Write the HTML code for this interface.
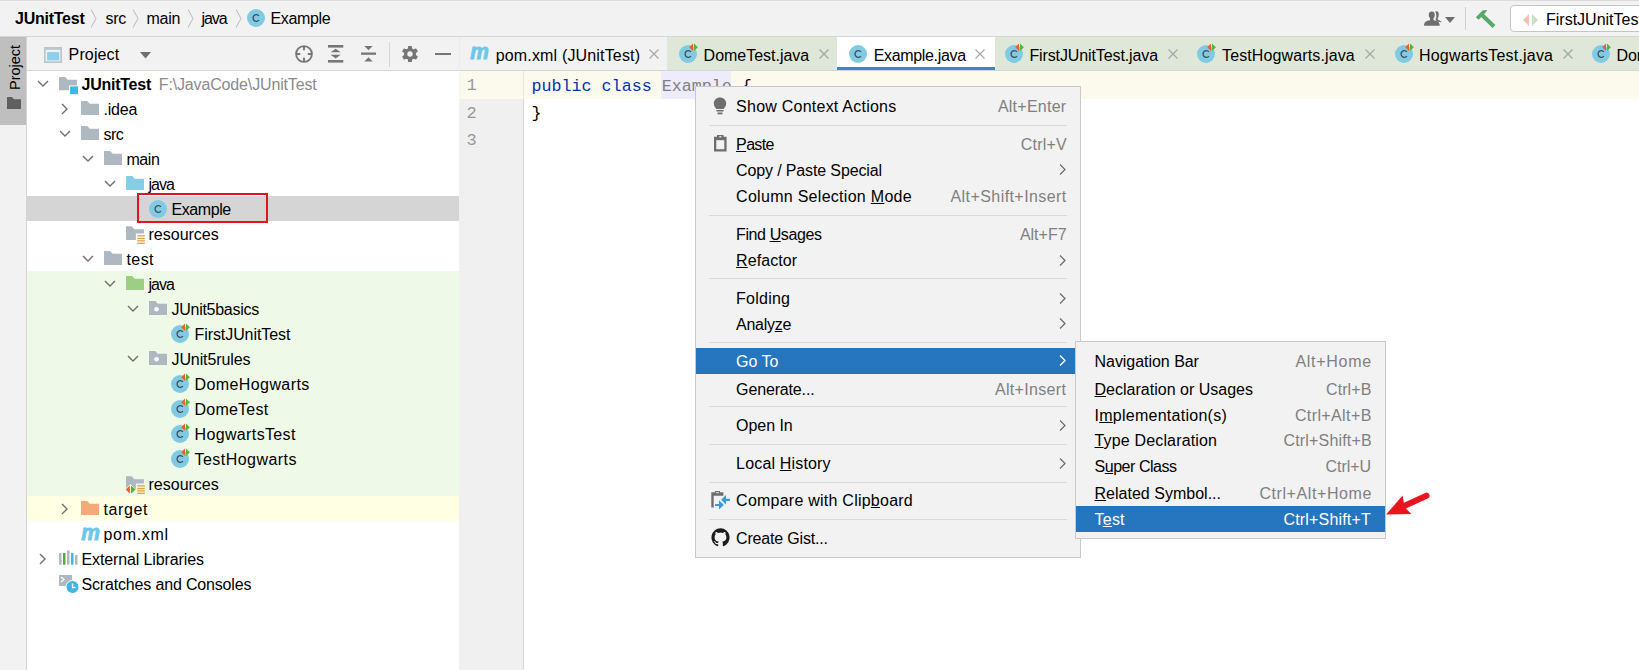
<!DOCTYPE html><html><head><meta charset="utf-8"><style>
html,body{margin:0;padding:0;}
body{width:1639px;height:670px;position:relative;overflow:hidden;background:#fff;font-family:"Liberation Sans", sans-serif;}
.t{position:absolute;white-space:pre;font-family:"Liberation Sans", sans-serif;}
.r{position:absolute;}
.s{position:absolute;overflow:visible;}
u{text-decoration:underline;text-underline-offset:0.6px;text-decoration-thickness:1.2px;}
</style></head><body>
<div class="r" style="left:0px;top:0px;width:1639px;height:36px;background:#f2f2f2;"></div>
<div class="r" style="left:0px;top:0px;width:1639px;height:1px;background:#dcdcdc;"></div>
<div class="r" style="left:0px;top:36px;width:1639px;height:1px;background:#d6d6d6;"></div>
<div class="t " style="left:15px;top:6.46px;line-height:26px;font-size:16px;color:#000;font-weight:bold;letter-spacing:-0.250px;">JUnitTest</div>
<svg class="s" style="left:90px;top:9px" width="7" height="19" viewBox="0 0 7 19"><path d="M1 0.5L6 9.5L1 18.5" fill="none" stroke="#c3c3c3" stroke-width="1.1"/></svg>
<svg class="s" style="left:132px;top:9px" width="7" height="19" viewBox="0 0 7 19"><path d="M1 0.5L6 9.5L1 18.5" fill="none" stroke="#c3c3c3" stroke-width="1.1"/></svg>
<svg class="s" style="left:187px;top:9px" width="7" height="19" viewBox="0 0 7 19"><path d="M1 0.5L6 9.5L1 18.5" fill="none" stroke="#c3c3c3" stroke-width="1.1"/></svg>
<svg class="s" style="left:235px;top:9px" width="7" height="19" viewBox="0 0 7 19"><path d="M1 0.5L6 9.5L1 18.5" fill="none" stroke="#c3c3c3" stroke-width="1.1"/></svg>
<div class="t " style="left:105.4px;top:6.46px;line-height:26px;font-size:16px;color:#000;letter-spacing:-0.200px;">src</div>
<div class="t " style="left:146.6px;top:6.46px;line-height:26px;font-size:16px;color:#000;letter-spacing:-0.333px;">main</div>
<div class="t " style="left:201.4px;top:6.46px;line-height:26px;font-size:16px;color:#000;letter-spacing:-1.000px;">java</div>
<svg class="s" style="left:247px;top:8px" width="19" height="19" viewBox="0 0 19 19"><circle cx="9" cy="10" r="9" fill="#80cbe3"/><path d="M11.9 7.9A3.3 3.3 0 1 0 11.9 12.1" fill="none" stroke="#3f4d55" stroke-width="1.3"/></svg>
<div class="t " style="left:270.4px;top:6.46px;line-height:26px;font-size:16px;color:#000;letter-spacing:-0.333px;">Example</div>
<svg class="s" style="left:1422px;top:9px" width="22" height="18" viewBox="0 0 22 18"><ellipse cx="9.75" cy="5.9" rx="3" ry="3.4" fill="#6e6e6e"/><rect x="8" y="8" width="3.5" height="4" fill="#6e6e6e"/><path d="M2 16.8C2 12.5 5 11.3 9.75 11.3C14.5 11.3 17.7 12.5 17.7 16.8Z" fill="#6e6e6e"/><path d="M13.3 2.5C15.5 1.5 17 3 16.7 6C16.5 8 15.8 9.5 15.5 10.3L19.6 12.8L19.4 13.2L14.5 12.5C14.3 11.5 14 10.8 13.6 10.3C14.6 8.5 14.8 6 13.3 2.5Z" fill="#6e6e6e"/></svg>
<svg class="s" style="left:1445px;top:17px" width="10" height="6" viewBox="0 0 10 6"><path d="M0 0H10L5 6Z" fill="#6e6e6e"/></svg>
<div class="r" style="left:1465px;top:7px;width:1px;height:23px;background:#d0d0d0;"></div>
<svg class="s" style="left:1474px;top:8px" width="24" height="22" viewBox="0 0 24 22"><path d="M1.8 9.2L8.8 2.2L13.2 2L11.8 4.2L4.6 11.8Z" fill="#59a869"/><path d="M6.6 8.4L9.4 5.6L21.4 17.1L18.6 19.9Z" fill="#59a869"/></svg>
<div class="r" style="left:1510px;top:5px;width:140px;height:25px;background:#fff;border:1px solid #c4c4c4;border-radius:4px;"></div>
<svg class="s" style="left:1523px;top:14px" width="16" height="12" viewBox="0 0 16 12"><path d="M6 0L0 6L6 12Z" fill="#f5c0b0"/><path d="M9 0L15 6L9 12Z" fill="#c5e3bf"/></svg>
<div class="t " style="left:1546px;top:7.46px;line-height:26px;font-size:16px;color:#000;">FirstJUnitTest</div>
<div class="r" style="left:0px;top:37px;width:26px;height:633px;background:#f2f2f2;"></div>
<div class="r" style="left:0px;top:37px;width:26px;height:88px;background:#bfbfbf;"></div>
<div class="r" style="left:26px;top:37px;width:1px;height:633px;background:#d4d4d4;"></div>
<div class="t" style="left:6px;top:90px;font-size:14.5px;line-height:18px;color:#000;transform-origin:0 0;transform:rotate(-90deg);">Project</div>
<svg class="s" style="left:7px;top:97px" width="14" height="12" viewBox="0 0 14 12"><path d="M0 0H5L7 2.3H14V12H0Z" fill="#5f5f5f"/></svg>
<div class="r" style="left:27px;top:37px;width:432px;height:33px;background:#f2f2f2;"></div>
<div class="r" style="left:27px;top:70px;width:432px;height:1px;background:#d6d6d6;"></div>
<svg class="s" style="left:44px;top:46.5px" width="18" height="16" viewBox="0 0 18 16"><rect x="0" y="0" width="18" height="16" fill="#bcc5cc"/><rect x="1.7" y="2.8" width="14.6" height="11.5" fill="#eef1f3"/><rect x="3.1" y="5.1" width="12.1" height="8.3" fill="#8dd0ec"/></svg>
<div class="t " style="left:68.6px;top:42.46px;line-height:26px;font-size:16px;color:#000;letter-spacing:0.133px;">Project</div>
<svg class="s" style="left:139.5px;top:52px" width="11" height="7" viewBox="0 0 11 7"><path d="M0 0H11L5.5 6.5Z" fill="#6e6e6e"/></svg>
<svg class="s" style="left:295px;top:44.5px" width="18" height="18" viewBox="0 0 18 18"><circle cx="9" cy="9" r="7.9" fill="none" stroke="#767676" stroke-width="1.9"/><path d="M9 1V5.2M9 12.8V17M1 9H5.2M12.8 9H17" stroke="#767676" stroke-width="1.9"/></svg>
<svg class="s" style="left:328.4px;top:45.2px" width="15.3" height="18" viewBox="0 0 15.3 18"><rect x="0" y="0" width="15.3" height="2.6" fill="#767676"/><rect x="0" y="15" width="15.3" height="2.6" fill="#767676"/><path d="M2.6 7.3L7.65 3.8L12.7 7.3Z M2.6 9.8L7.65 13.6L12.7 9.8Z" fill="#767676"/></svg>
<svg class="s" style="left:361.4px;top:46.2px" width="15" height="16" viewBox="0 0 15 16"><rect x="0" y="6.5" width="15" height="2.3" fill="#767676"/><path d="M3.3 0H11.7L7.5 4.2Z M3.3 15.6H11.7L7.5 11.2Z" fill="#767676"/></svg>
<div class="r" style="left:389px;top:42px;width:1px;height:25px;background:#d6d6d6;"></div>
<svg class="s" style="left:401.8px;top:45.8px" width="16" height="16" viewBox="0 0 16 16"><g transform="translate(8 8)"><rect x="-2" y="-8.1" width="4" height="4" rx="0.7" fill="#767676" transform="rotate(0)"/><rect x="-2" y="-8.1" width="4" height="4" rx="0.7" fill="#767676" transform="rotate(60)"/><rect x="-2" y="-8.1" width="4" height="4" rx="0.7" fill="#767676" transform="rotate(120)"/><rect x="-2" y="-8.1" width="4" height="4" rx="0.7" fill="#767676" transform="rotate(180)"/><rect x="-2" y="-8.1" width="4" height="4" rx="0.7" fill="#767676" transform="rotate(240)"/><rect x="-2" y="-8.1" width="4" height="4" rx="0.7" fill="#767676" transform="rotate(300)"/><circle r="6" fill="#767676"/><circle r="2.7" fill="#f2f2f2"/></g></svg>
<div class="r" style="left:435.2px;top:52.7px;width:15.4px;height:2.3px;background:#767676;"></div>
<div class="r" style="left:27px;top:196px;width:432px;height:25px;background:#d5d5d5;"></div>
<div class="r" style="left:27px;top:271px;width:432px;height:225px;background:#eff9e7;"></div>
<div class="r" style="left:27px;top:496px;width:432px;height:25px;background:#ffffe3;"></div>
<svg class="s" style="left:36.5px;top:80px" width="12" height="8" viewBox="0 0 12 8"><path d="M1 1L6 6L11 1" fill="none" stroke="#6e6e6e" stroke-width="1.4"/></svg>
<svg class="s" style="left:59px;top:77px" width="20" height="18" viewBox="0 0 20 18"><path d="M0 0H6.2L8.7 2.8H18V13.3H0Z" fill="#aeb8c0"/><rect x="10" y="8.4" width="9" height="9" fill="#fff"/><rect x="11" y="9.4" width="8" height="7.8" fill="#40b6e0"/></svg>
<div class="t " style="left:81.5px;top:72.46px;line-height:25px;font-size:16px;color:#000;font-weight:bold;letter-spacing:-0.250px;">JUnitTest</div>
<div class="t " style="left:158.8px;top:72.46px;line-height:25px;font-size:16px;color:#8a8a8a;letter-spacing:-0.150px;">F:\JavaCode\JUnitTest</div>
<svg class="s" style="left:60.8px;top:103px" width="8" height="12" viewBox="0 0 8 12"><path d="M1 1L6 6L1 11" fill="none" stroke="#6e6e6e" stroke-width="1.4"/></svg>
<svg class="s" style="left:81px;top:101px" width="18" height="14" viewBox="0 0 18 14"><path d="M0 0H6.2L8.7 2.8H18V14H0Z" fill="#aeb8c0"/></svg>
<div class="t " style="left:103.5px;top:97.46px;line-height:25px;font-size:16px;color:#000;letter-spacing:-0.200px;">.idea</div>
<svg class="s" style="left:58.5px;top:130px" width="12" height="8" viewBox="0 0 12 8"><path d="M1 1L6 6L11 1" fill="none" stroke="#6e6e6e" stroke-width="1.4"/></svg>
<svg class="s" style="left:81px;top:126px" width="18" height="14" viewBox="0 0 18 14"><path d="M0 0H6.2L8.7 2.8H18V14H0Z" fill="#aeb8c0"/></svg>
<div class="t " style="left:103.5px;top:122.46px;line-height:25px;font-size:16px;color:#000;letter-spacing:-0.500px;">src</div>
<svg class="s" style="left:81.5px;top:155px" width="12" height="8" viewBox="0 0 12 8"><path d="M1 1L6 6L11 1" fill="none" stroke="#6e6e6e" stroke-width="1.4"/></svg>
<svg class="s" style="left:104px;top:151px" width="18" height="14" viewBox="0 0 18 14"><path d="M0 0H6.2L8.7 2.8H18V14H0Z" fill="#aeb8c0"/></svg>
<div class="t " style="left:126.5px;top:147.46px;line-height:25px;font-size:16px;color:#000;letter-spacing:-0.467px;">main</div>
<svg class="s" style="left:103.5px;top:180px" width="12" height="8" viewBox="0 0 12 8"><path d="M1 1L6 6L11 1" fill="none" stroke="#6e6e6e" stroke-width="1.4"/></svg>
<svg class="s" style="left:126px;top:176px" width="18" height="14" viewBox="0 0 18 14"><path d="M0 0H6.2L8.7 2.8H18V14H0Z" fill="#87cde8"/></svg>
<div class="t " style="left:148.5px;top:172.46px;line-height:25px;font-size:16px;color:#000;letter-spacing:-1.000px;">java</div>
<svg class="s" style="left:149px;top:199px" width="19" height="19" viewBox="0 0 19 19"><circle cx="9" cy="10" r="9" fill="#80cbe3"/><path d="M11.9 7.9A3.3 3.3 0 1 0 11.9 12.1" fill="none" stroke="#3f4d55" stroke-width="1.3"/></svg>
<div class="t " style="left:171.5px;top:197.46px;line-height:25px;font-size:16px;color:#000;letter-spacing:-0.433px;">Example</div>
<svg class="s" style="left:126px;top:226px" width="20" height="20" viewBox="0 0 20 20"><path d="M0 0.3H5.6L8.4 3.2H17.9V7.6H9.9V13.9H0Z" fill="#aeb8c0"/><rect x="11.3" y="9.2" width="7.5" height="1.3" fill="#e0a23c"/><rect x="11.3" y="11.9" width="7.5" height="1.3" fill="#e0a23c"/><rect x="11.3" y="14.2" width="7.5" height="1.3" fill="#e0a23c"/><rect x="11.3" y="16.7" width="7.5" height="1.3" fill="#e0a23c"/></svg>
<div class="t " style="left:148.5px;top:222.46px;line-height:25px;font-size:16px;color:#000;letter-spacing:0.000px;">resources</div>
<svg class="s" style="left:81.5px;top:255px" width="12" height="8" viewBox="0 0 12 8"><path d="M1 1L6 6L11 1" fill="none" stroke="#6e6e6e" stroke-width="1.4"/></svg>
<svg class="s" style="left:104px;top:251px" width="18" height="14" viewBox="0 0 18 14"><path d="M0 0H6.2L8.7 2.8H18V14H0Z" fill="#aeb8c0"/></svg>
<div class="t " style="left:126.5px;top:247.46px;line-height:25px;font-size:16px;color:#000;letter-spacing:0.400px;">test</div>
<svg class="s" style="left:103.5px;top:280px" width="12" height="8" viewBox="0 0 12 8"><path d="M1 1L6 6L11 1" fill="none" stroke="#6e6e6e" stroke-width="1.4"/></svg>
<svg class="s" style="left:126px;top:276px" width="18" height="14" viewBox="0 0 18 14"><path d="M0 0H6.2L8.7 2.8H18V14H0Z" fill="#9ccf84"/></svg>
<div class="t " style="left:148.5px;top:272.46px;line-height:25px;font-size:16px;color:#000;letter-spacing:-1.000px;">java</div>
<svg class="s" style="left:126.5px;top:305px" width="12" height="8" viewBox="0 0 12 8"><path d="M1 1L6 6L11 1" fill="none" stroke="#6e6e6e" stroke-width="1.4"/></svg>
<svg class="s" style="left:149px;top:301px" width="18" height="14" viewBox="0 0 18 14"><path d="M0 0H6.2L8.7 2.8H18V14H0Z" fill="#aeb8c0"/><circle cx="7.5" cy="8.3" r="2.3" fill="#fff"/></svg>
<div class="t " style="left:171.5px;top:297.46px;line-height:25px;font-size:16px;color:#000;letter-spacing:-0.273px;">JUnit5basics</div>
<svg class="s" style="left:171px;top:324px" width="19" height="19" viewBox="0 0 19 19"><circle cx="9" cy="10" r="9" fill="#80cbe3"/><path d="M11.9 7.9A3.3 3.3 0 1 0 11.9 12.1" fill="none" stroke="#3f4d55" stroke-width="1.3"/><path d="M10.2 3.3L14 -0.4V7Z" fill="#ee5f22"/><path d="M15 -0.4L18.9 3.3L15 7Z" fill="#5bb140"/></svg>
<div class="t " style="left:194.5px;top:322.46px;line-height:25px;font-size:16px;color:#000;letter-spacing:-0.077px;">FirstJUnitTest</div>
<svg class="s" style="left:126.5px;top:355px" width="12" height="8" viewBox="0 0 12 8"><path d="M1 1L6 6L11 1" fill="none" stroke="#6e6e6e" stroke-width="1.4"/></svg>
<svg class="s" style="left:149px;top:351px" width="18" height="14" viewBox="0 0 18 14"><path d="M0 0H6.2L8.7 2.8H18V14H0Z" fill="#aeb8c0"/><circle cx="7.5" cy="8.3" r="2.3" fill="#fff"/></svg>
<div class="t " style="left:171.5px;top:347.46px;line-height:25px;font-size:16px;color:#000;letter-spacing:-0.100px;">JUnit5rules</div>
<svg class="s" style="left:171px;top:374px" width="19" height="19" viewBox="0 0 19 19"><circle cx="9" cy="10" r="9" fill="#80cbe3"/><path d="M11.9 7.9A3.3 3.3 0 1 0 11.9 12.1" fill="none" stroke="#3f4d55" stroke-width="1.3"/><path d="M10.2 3.3L14 -0.4V7Z" fill="#ee5f22"/><path d="M15 -0.4L18.9 3.3L15 7Z" fill="#5bb140"/></svg>
<div class="t " style="left:194.5px;top:372.46px;line-height:25px;font-size:16px;color:#000;letter-spacing:0.409px;">DomeHogwarts</div>
<svg class="s" style="left:171px;top:399px" width="19" height="19" viewBox="0 0 19 19"><circle cx="9" cy="10" r="9" fill="#80cbe3"/><path d="M11.9 7.9A3.3 3.3 0 1 0 11.9 12.1" fill="none" stroke="#3f4d55" stroke-width="1.3"/><path d="M10.2 3.3L14 -0.4V7Z" fill="#ee5f22"/><path d="M15 -0.4L18.9 3.3L15 7Z" fill="#5bb140"/></svg>
<div class="t " style="left:194.5px;top:397.46px;line-height:25px;font-size:16px;color:#000;letter-spacing:0.229px;">DomeTest</div>
<svg class="s" style="left:171px;top:424px" width="19" height="19" viewBox="0 0 19 19"><circle cx="9" cy="10" r="9" fill="#80cbe3"/><path d="M11.9 7.9A3.3 3.3 0 1 0 11.9 12.1" fill="none" stroke="#3f4d55" stroke-width="1.3"/><path d="M10.2 3.3L14 -0.4V7Z" fill="#ee5f22"/><path d="M15 -0.4L18.9 3.3L15 7Z" fill="#5bb140"/></svg>
<div class="t " style="left:194.5px;top:422.46px;line-height:25px;font-size:16px;color:#000;letter-spacing:0.364px;">HogwartsTest</div>
<svg class="s" style="left:171px;top:449px" width="19" height="19" viewBox="0 0 19 19"><circle cx="9" cy="10" r="9" fill="#80cbe3"/><path d="M11.9 7.9A3.3 3.3 0 1 0 11.9 12.1" fill="none" stroke="#3f4d55" stroke-width="1.3"/><path d="M10.2 3.3L14 -0.4V7Z" fill="#ee5f22"/><path d="M15 -0.4L18.9 3.3L15 7Z" fill="#5bb140"/></svg>
<div class="t " style="left:194.5px;top:447.46px;line-height:25px;font-size:16px;color:#000;letter-spacing:0.455px;">TestHogwarts</div>
<svg class="s" style="left:126px;top:476px" width="20" height="20" viewBox="0 0 20 20"><path d="M0 0.3H5.6L8.4 3.2H17.9V7.6H9.9V13.9H0Z" fill="#aeb8c0"/><rect x="11.3" y="9.2" width="7.5" height="1.3" fill="#e0a23c"/><rect x="11.3" y="11.9" width="7.5" height="1.3" fill="#e0a23c"/><rect x="11.3" y="14.2" width="7.5" height="1.3" fill="#e0a23c"/><rect x="11.3" y="16.7" width="7.5" height="1.3" fill="#e0a23c"/><path d="M-1.2 13.5L4.4 7.9L9.9 13.5L4.4 19.1Z" fill="#eff9e7"/><path d="M-0.2 13.5L3.9 9.4V17.7Z" fill="#ee5f22"/><path d="M5 9.4L9.5 13.5L5 17.7Z" fill="#5bb140"/></svg>
<div class="t " style="left:148.5px;top:472.46px;line-height:25px;font-size:16px;color:#000;letter-spacing:0.000px;">resources</div>
<svg class="s" style="left:60.8px;top:503px" width="8" height="12" viewBox="0 0 8 12"><path d="M1 1L6 6L1 11" fill="none" stroke="#6e6e6e" stroke-width="1.4"/></svg>
<svg class="s" style="left:81px;top:501px" width="18" height="14" viewBox="0 0 18 14"><path d="M0 0H6.2L8.7 2.8H18V14H0Z" fill="#f5a878"/></svg>
<div class="t " style="left:103.5px;top:497.46px;line-height:25px;font-size:16px;color:#000;letter-spacing:0.600px;">target</div>
<svg class="s" style="left:81px;top:527px" width="18" height="14" viewBox="0 0 18 14"><text x="0.3" y="13.3" font-family="Liberation Sans" font-weight="bold" font-style="italic" font-size="22" fill="#6ec6e8" stroke="#6ec6e8" stroke-width="0.9" textLength="18.6" lengthAdjust="spacingAndGlyphs">m</text></svg>
<div class="t " style="left:103.5px;top:522.46px;line-height:25px;font-size:16px;color:#000;letter-spacing:0.667px;">pom.xml</div>
<svg class="s" style="left:38.8px;top:553px" width="8" height="12" viewBox="0 0 8 12"><path d="M1 1L6 6L1 11" fill="none" stroke="#6e6e6e" stroke-width="1.4"/></svg>
<svg class="s" style="left:59px;top:550px" width="20" height="16" viewBox="0 0 20 16"><rect x="0" y="3" width="2.5" height="11.7" fill="#aeb8c0"/><rect x="4" y="3" width="2.5" height="11.7" fill="#59a83b"/><rect x="8" y="0.3" width="2.5" height="14.4" fill="#aeb8c0"/><rect x="12" y="3" width="2.5" height="11.7" fill="#40b6e0"/><rect x="16" y="5" width="2.5" height="9.7" fill="#aeb8c0"/></svg>
<div class="t " style="left:81.5px;top:547.46px;line-height:25px;font-size:16px;color:#000;letter-spacing:-0.118px;">External Libraries</div>
<svg class="s" style="left:59px;top:574px" width="20" height="20" viewBox="0 0 20 20"><rect x="0" y="1" width="13" height="11" fill="#aeb8c0"/><path d="M2 3L5 5.5L2 8" fill="none" stroke="#fff" stroke-width="1.2"/><circle cx="13.5" cy="13" r="6.5" fill="#40b6e0" stroke="#fff" stroke-width="1"/><path d="M13.5 9.5V13.5H16.5" fill="none" stroke="#fff" stroke-width="1.3"/></svg>
<div class="t " style="left:81.5px;top:572.46px;line-height:25px;font-size:16px;color:#000;letter-spacing:-0.167px;">Scratches and Consoles</div>
<div class="r" style="left:137px;top:193px;width:127px;height:26px;border:2px solid #e5141c;"></div>
<div class="r" style="left:459px;top:37px;width:1px;height:34px;background:#ebebeb;"></div>
<div class="r" style="left:460px;top:37px;width:1179px;height:33px;background:#f2f2f2;"></div>
<div class="r" style="left:667px;top:37px;width:170px;height:33px;background:#dfe8d8;"></div>
<div class="r" style="left:995px;top:37px;width:644px;height:33px;background:#dfe8d8;"></div>
<div class="r" style="left:837px;top:37px;width:158px;height:33px;background:#ffffff;"></div>
<div class="r" style="left:460px;top:70px;width:1179px;height:1px;background:#d6d6d6;"></div>
<div class="r" style="left:837px;top:67px;width:158px;height:3px;background:#4083c9;"></div>
<svg class="s" style="left:470.3px;top:46.2px" width="18" height="14" viewBox="0 0 18 14"><text x="0.3" y="13.3" font-family="Liberation Sans" font-weight="bold" font-style="italic" font-size="22" fill="#6ec6e8" stroke="#6ec6e8" stroke-width="0.9" textLength="18.6" lengthAdjust="spacingAndGlyphs">m</text></svg>
<div class="t " style="left:495.7px;top:43.46px;line-height:26px;font-size:16px;color:#000;letter-spacing:0.167px;">pom.xml (JUnitTest)</div>
<svg class="s" style="left:649px;top:49px" width="10" height="10" viewBox="0 0 10 10"><path d="M0.5 0.5L9.5 9.5M9.5 0.5L0.5 9.5" stroke="#a8a8a8" stroke-width="1.3"/></svg>
<svg class="s" style="left:679px;top:44px" width="19" height="19" viewBox="0 0 19 19"><circle cx="9" cy="10" r="9" fill="#80cbe3"/><path d="M11.9 7.9A3.3 3.3 0 1 0 11.9 12.1" fill="none" stroke="#3f4d55" stroke-width="1.3"/><path d="M10.2 3.3L14 -0.4V7Z" fill="#ee5f22"/><path d="M15 -0.4L18.9 3.3L15 7Z" fill="#5bb140"/></svg>
<div class="t " style="left:703.6px;top:43.46px;line-height:26px;font-size:16px;color:#000;letter-spacing:-0.017px;">DomeTest.java</div>
<svg class="s" style="left:819px;top:49px" width="10" height="10" viewBox="0 0 10 10"><path d="M0.5 0.5L9.5 9.5M9.5 0.5L0.5 9.5" stroke="#a8a8a8" stroke-width="1.3"/></svg>
<svg class="s" style="left:849px;top:44px" width="19" height="19" viewBox="0 0 19 19"><circle cx="9" cy="10" r="9" fill="#80cbe3"/><path d="M11.9 7.9A3.3 3.3 0 1 0 11.9 12.1" fill="none" stroke="#3f4d55" stroke-width="1.3"/></svg>
<div class="t " style="left:873.7px;top:43.46px;line-height:26px;font-size:16px;color:#000;letter-spacing:-0.336px;">Example.java</div>
<svg class="s" style="left:975px;top:49px" width="10" height="10" viewBox="0 0 10 10"><path d="M0.5 0.5L9.5 9.5M9.5 0.5L0.5 9.5" stroke="#a8a8a8" stroke-width="1.3"/></svg>
<svg class="s" style="left:1005px;top:44px" width="19" height="19" viewBox="0 0 19 19"><circle cx="9" cy="10" r="9" fill="#80cbe3"/><path d="M11.9 7.9A3.3 3.3 0 1 0 11.9 12.1" fill="none" stroke="#3f4d55" stroke-width="1.3"/><path d="M10.2 3.3L14 -0.4V7Z" fill="#ee5f22"/><path d="M15 -0.4L18.9 3.3L15 7Z" fill="#5bb140"/></svg>
<div class="t " style="left:1029.4px;top:43.46px;line-height:26px;font-size:16px;color:#000;letter-spacing:-0.111px;">FirstJUnitTest.java</div>
<svg class="s" style="left:1168px;top:49px" width="10" height="10" viewBox="0 0 10 10"><path d="M0.5 0.5L9.5 9.5M9.5 0.5L0.5 9.5" stroke="#a8a8a8" stroke-width="1.3"/></svg>
<svg class="s" style="left:1197px;top:44px" width="19" height="19" viewBox="0 0 19 19"><circle cx="9" cy="10" r="9" fill="#80cbe3"/><path d="M11.9 7.9A3.3 3.3 0 1 0 11.9 12.1" fill="none" stroke="#3f4d55" stroke-width="1.3"/><path d="M10.2 3.3L14 -0.4V7Z" fill="#ee5f22"/><path d="M15 -0.4L18.9 3.3L15 7Z" fill="#5bb140"/></svg>
<div class="t " style="left:1222px;top:43.46px;line-height:26px;font-size:16px;color:#000;letter-spacing:0.125px;">TestHogwarts.java</div>
<svg class="s" style="left:1365px;top:49px" width="10" height="10" viewBox="0 0 10 10"><path d="M0.5 0.5L9.5 9.5M9.5 0.5L0.5 9.5" stroke="#a8a8a8" stroke-width="1.3"/></svg>
<svg class="s" style="left:1395px;top:44px" width="19" height="19" viewBox="0 0 19 19"><circle cx="9" cy="10" r="9" fill="#80cbe3"/><path d="M11.9 7.9A3.3 3.3 0 1 0 11.9 12.1" fill="none" stroke="#3f4d55" stroke-width="1.3"/><path d="M10.2 3.3L14 -0.4V7Z" fill="#ee5f22"/><path d="M15 -0.4L18.9 3.3L15 7Z" fill="#5bb140"/></svg>
<div class="t " style="left:1419px;top:43.46px;line-height:26px;font-size:16px;color:#000;letter-spacing:0.206px;">HogwartsTest.java</div>
<svg class="s" style="left:1563px;top:49px" width="10" height="10" viewBox="0 0 10 10"><path d="M0.5 0.5L9.5 9.5M9.5 0.5L0.5 9.5" stroke="#a8a8a8" stroke-width="1.3"/></svg>
<svg class="s" style="left:1592px;top:44px" width="19" height="19" viewBox="0 0 19 19"><circle cx="9" cy="10" r="9" fill="#80cbe3"/><path d="M11.9 7.9A3.3 3.3 0 1 0 11.9 12.1" fill="none" stroke="#3f4d55" stroke-width="1.3"/><path d="M10.2 3.3L14 -0.4V7Z" fill="#ee5f22"/><path d="M15 -0.4L18.9 3.3L15 7Z" fill="#5bb140"/></svg>
<div class="t " style="left:1616.4px;top:43.46px;line-height:26px;font-size:16px;color:#000;letter-spacing:-0.017px;">DomeTest.java</div>
<div class="r" style="left:459px;top:71px;width:64px;height:599px;background:#f0f0f0;"></div>
<div class="r" style="left:523px;top:71px;width:1px;height:599px;background:#d6d6d6;"></div>
<div class="r" style="left:460px;top:71px;width:1179px;height:28px;background:#fcfaed;"></div>
<div class="r" style="left:459px;top:71px;width:1px;height:28px;background:#f7f5e9;"></div>
<div class="r" style="left:523px;top:71px;width:1px;height:28px;background:#e8e6d8;"></div>
<div class="t " style="left:466.6px;top:73.21px;line-height:26px;font-size:17px;color:#999999;font-family:'Liberation Mono', monospace;">1</div>
<div class="t " style="left:466.6px;top:100.61px;line-height:26px;font-size:17px;color:#999999;font-family:'Liberation Mono', monospace;">2</div>
<div class="t " style="left:466.6px;top:128.01px;line-height:26px;font-size:17px;color:#999999;font-family:'Liberation Mono', monospace;">3</div>
<div class="r" style="left:661px;top:71px;width:70px;height:28px;background:#edebfc;"></div>
<div class="t" style="left:531.5px;top:75.5px;font-family:'Liberation Mono', monospace;font-size:16.7px;line-height:22px;color:#0033b3;">public class <span style="color:#808080">Example</span><span style="color:#000"> {</span></div>
<div class="t" style="left:531.5px;top:103px;font-family:'Liberation Mono', monospace;font-size:16.7px;line-height:22px;color:#000;">}</div>
<div class="r" style="left:695px;top:86px;width:384px;height:470px;background:#f2f2f2;border:1px solid #c9c9c9;"></div>
<div class="r" style="left:696px;top:348px;width:379px;height:26px;background:#2675bf;"></div>
<div class="t " style="left:736.1px;top:94.36px;line-height:26px;font-size:16px;color:#000;letter-spacing:0.237px;">Show Context Actions</div>
<div class="t " style="left:997.9000000000001px;top:94.36px;line-height:26px;font-size:16px;color:#808080;letter-spacing:0.250px;">Alt+Enter</div>
<div class="t " style="left:736.1px;top:131.96px;line-height:26px;font-size:16px;color:#000;letter-spacing:-0.650px;"><u>P</u>aste</div>
<div class="t " style="left:1020.7px;top:131.96px;line-height:26px;font-size:16px;color:#808080;letter-spacing:0.240px;">Ctrl+V</div>
<div class="t " style="left:736.1px;top:158.26px;line-height:26px;font-size:16px;color:#000;letter-spacing:-0.137px;">Copy / Paste Special</div>
<svg class="s" style="left:1059px;top:164.4px" width="7" height="11" viewBox="0 0 7 11"><path d="M1 0.5L6 5.5L1 10.5" fill="none" stroke="#6e6e6e" stroke-width="1.3"/></svg>
<div class="t " style="left:736.1px;top:183.86px;line-height:26px;font-size:16px;color:#000;letter-spacing:0.285px;">Column Selection <u>M</u>ode</div>
<div class="t " style="left:950.5000000000001px;top:183.86px;line-height:26px;font-size:16px;color:#808080;letter-spacing:0.427px;">Alt+Shift+Insert</div>
<div class="t " style="left:736.1px;top:222.36px;line-height:26px;font-size:16px;color:#000;letter-spacing:-0.400px;">Find <u>U</u>sages</div>
<div class="t " style="left:1019.9000000000001px;top:222.36px;line-height:26px;font-size:16px;color:#808080;letter-spacing:0.000px;">Alt+F7</div>
<div class="t " style="left:736.1px;top:248.36px;line-height:26px;font-size:16px;color:#000;letter-spacing:0.086px;"><u>R</u>efactor</div>
<svg class="s" style="left:1059px;top:254.5px" width="7" height="11" viewBox="0 0 7 11"><path d="M1 0.5L6 5.5L1 10.5" fill="none" stroke="#6e6e6e" stroke-width="1.3"/></svg>
<div class="t " style="left:736.1px;top:286.46px;line-height:26px;font-size:16px;color:#000;letter-spacing:0.233px;">Folding</div>
<svg class="s" style="left:1059px;top:292.6px" width="7" height="11" viewBox="0 0 7 11"><path d="M1 0.5L6 5.5L1 10.5" fill="none" stroke="#6e6e6e" stroke-width="1.3"/></svg>
<div class="t " style="left:736.1px;top:312.26px;line-height:26px;font-size:16px;color:#000;letter-spacing:-0.283px;">Analy<u>z</u>e</div>
<svg class="s" style="left:1059px;top:318.40000000000003px" width="7" height="11" viewBox="0 0 7 11"><path d="M1 0.5L6 5.5L1 10.5" fill="none" stroke="#6e6e6e" stroke-width="1.3"/></svg>
<div class="t " style="left:736.1px;top:348.76px;line-height:26px;font-size:16px;color:#fff;letter-spacing:0.000px;">Go To</div>
<svg class="s" style="left:1059px;top:354.90000000000003px" width="7" height="11" viewBox="0 0 7 11"><path d="M1 0.5L6 5.5L1 10.5" fill="none" stroke="#fff" stroke-width="1.3"/></svg>
<div class="t " style="left:736.1px;top:376.66px;line-height:26px;font-size:16px;color:#000;letter-spacing:-0.150px;">Generate...</div>
<div class="t " style="left:994.9000000000001px;top:376.66px;line-height:26px;font-size:16px;color:#808080;letter-spacing:0.333px;">Alt+Insert</div>
<div class="t " style="left:736.1px;top:413.46px;line-height:26px;font-size:16px;color:#000;letter-spacing:-0.050px;">Open In</div>
<svg class="s" style="left:1059px;top:419.6px" width="7" height="11" viewBox="0 0 7 11"><path d="M1 0.5L6 5.5L1 10.5" fill="none" stroke="#6e6e6e" stroke-width="1.3"/></svg>
<div class="t " style="left:736.1px;top:451.46px;line-height:26px;font-size:16px;color:#000;letter-spacing:0.167px;">Local <u>H</u>istory</div>
<svg class="s" style="left:1059px;top:457.6px" width="7" height="11" viewBox="0 0 7 11"><path d="M1 0.5L6 5.5L1 10.5" fill="none" stroke="#6e6e6e" stroke-width="1.3"/></svg>
<div class="t " style="left:736.1px;top:488.26px;line-height:26px;font-size:16px;color:#000;letter-spacing:0.238px;">Compare with Clip<u>b</u>oard</div>
<div class="t " style="left:736.1px;top:526.06px;line-height:26px;font-size:16px;color:#000;letter-spacing:-0.185px;">Create Gist...</div>
<div class="r" style="left:709px;top:125px;width:358px;height:1px;background:#d9d9d9;"></div>
<div class="r" style="left:709px;top:215px;width:358px;height:1px;background:#d9d9d9;"></div>
<div class="r" style="left:709px;top:278px;width:358px;height:1px;background:#d9d9d9;"></div>
<div class="r" style="left:709px;top:342px;width:358px;height:1px;background:#d9d9d9;"></div>
<div class="r" style="left:709px;top:406px;width:358px;height:1px;background:#d9d9d9;"></div>
<div class="r" style="left:709px;top:444px;width:358px;height:1px;background:#d9d9d9;"></div>
<div class="r" style="left:709px;top:482px;width:358px;height:1px;background:#d9d9d9;"></div>
<div class="r" style="left:709px;top:519px;width:358px;height:1px;background:#d9d9d9;"></div>
<svg class="s" style="left:713px;top:97px" width="14" height="18" viewBox="0 0 14 18"><path d="M7 0.5C3.4 0.5 0.8 3.2 0.8 6.5C0.8 9 2.5 10.5 3.3 12H10.7C11.5 10.5 13.2 9 13.2 6.5C13.2 3.2 10.6 0.5 7 0.5Z" fill="#6e6e6e"/><rect x="3.5" y="13" width="7" height="1.5" fill="#6e6e6e"/><rect x="4.5" y="15.5" width="5" height="1.8" fill="#6e6e6e"/></svg>
<svg class="s" style="left:713.6px;top:135px" width="13" height="17" viewBox="0 0 13 17"><path d="M0 1.8H3V0H9.6V1.8H12.6V16.4H0Z" fill="#6e6e6e"/><rect x="2.3" y="5.2" width="8" height="9" fill="#f2f2f2"/><rect x="5.3" y="1" width="2" height="1.5" fill="#e0e0e0"/></svg>
<svg class="s" style="left:711px;top:491px" width="20" height="20" viewBox="0 0 20 20"><path d="M0.3 1.3H4V0H9V1.3H12.4V4.7H2.7V16.4H0.3Z" fill="#6e6e6e"/><rect x="5" y="1" width="3" height="1.2" fill="#d0d0d0"/><path d="M4 12.9H8V9.2L12.8 13.9L8 18.6V14.9H4Z" fill="#3a9ad9"/><path d="M18.9 7.8H15V4L10.1 8.8L15 13.6V9.9H18.9Z" fill="#3a9ad9"/></svg>
<svg class="s" style="left:711px;top:528px" width="19" height="19" viewBox="0 0 19 19"><path fill="#1b1b1b" d="M9.5 0.3A9.2 9.2 0 0 0 6.6 18.2C7.1 18.3 7.2 18 7.2 17.8V16.2C4.6 16.8 4.1 15 4.1 15C3.7 13.9 3 13.6 3 13.6C2.2 13 3.1 13 3.1 13C4 13.1 4.5 14 4.5 14C5.3 15.4 6.6 15 7.2 14.7C7.3 14.1 7.5 13.7 7.8 13.5C5.7 13.3 3.6 12.5 3.6 9C3.6 8 4 7.1 4.6 6.5C4.5 6.2 4.2 5.3 4.7 4C4.7 4 5.5 3.7 7.2 4.9A9 9 0 0 1 11.8 4.9C13.5 3.7 14.3 4 14.3 4C14.8 5.3 14.5 6.2 14.4 6.5C15 7.1 15.4 8 15.4 9C15.4 12.5 13.3 13.3 11.2 13.5C11.5 13.8 11.8 14.4 11.8 15.2V17.8C11.8 18 11.9 18.3 12.4 18.2A9.2 9.2 0 0 0 9.5 0.3Z"/></svg>
<div class="r" style="left:1075px;top:341px;width:309px;height:196px;background:#f2f2f2;border:1px solid #c9c9c9;"></div>
<div class="r" style="left:1076px;top:506px;width:309px;height:26px;background:#2675bf;"></div>
<div class="t " style="left:1094.5px;top:349.36px;line-height:26px;font-size:16px;color:#000;letter-spacing:-0.038px;">Navigation Bar</div>
<div class="t " style="left:1295.4px;top:349.36px;line-height:26px;font-size:16px;color:#808080;letter-spacing:0.714px;">Alt+Home</div>
<div class="t " style="left:1094.5px;top:376.76px;line-height:26px;font-size:16px;color:#000;letter-spacing:0.010px;"><u>D</u>eclaration or Usages</div>
<div class="t " style="left:1326.0px;top:376.76px;line-height:26px;font-size:16px;color:#808080;letter-spacing:0.080px;">Ctrl+B</div>
<div class="t " style="left:1094.5px;top:403.06px;line-height:26px;font-size:16px;color:#000;letter-spacing:0.262px;">I<u>m</u>plementation(s)</div>
<div class="t " style="left:1294.9px;top:403.06px;line-height:26px;font-size:16px;color:#808080;letter-spacing:0.389px;">Ctrl+Alt+B</div>
<div class="t " style="left:1094.5px;top:428.46px;line-height:26px;font-size:16px;color:#000;letter-spacing:0.160px;"><u>T</u>ype Declaration</div>
<div class="t " style="left:1283.4px;top:428.46px;line-height:26px;font-size:16px;color:#808080;letter-spacing:0.182px;">Ctrl+Shift+B</div>
<div class="t " style="left:1094.5px;top:454.06px;line-height:26px;font-size:16px;color:#000;letter-spacing:-0.460px;">S<u>u</u>per Class</div>
<div class="t " style="left:1325.4px;top:454.06px;line-height:26px;font-size:16px;color:#808080;letter-spacing:0.000px;">Ctrl+U</div>
<div class="t " style="left:1094.5px;top:481.26px;line-height:26px;font-size:16px;color:#000;letter-spacing:0.013px;"><u>R</u>elated Symbol...</div>
<div class="t " style="left:1259.4px;top:481.26px;line-height:26px;font-size:16px;color:#808080;letter-spacing:0.583px;">Ctrl+Alt+Home</div>
<div class="t " style="left:1094.5px;top:507.46px;line-height:26px;font-size:16px;color:#fff;letter-spacing:0.233px;">T<u>e</u>st</div>
<div class="t " style="left:1283.4px;top:507.46px;line-height:26px;font-size:16px;color:#fff;letter-spacing:0.182px;">Ctrl+Shift+T</div>
<svg class="s" style="left:1380px;top:485px" width="55" height="35" viewBox="0 0 55 35"><path d="M6 29.6L22.6 10.6L24 18.5L26.5 24L31.3 29Z" fill="#e8141e"/><path d="M23 21.5L46.5 10.7" stroke="#e8141e" stroke-width="6" stroke-linecap="round"/></svg>
</body></html>
